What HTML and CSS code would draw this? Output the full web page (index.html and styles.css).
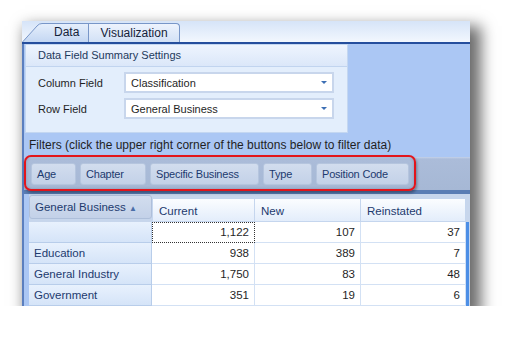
FILE: index.html
```html
<!DOCTYPE html>
<html lang="en">
  <head>
    <meta charset="UTF-8" />
    <title>Pivot Data</title>
    <link rel="stylesheet" href="styles.css">
  </head>
  <body>
    <main class="window">
      <nav class="tabstrip">
        <div class="tab tab-data">
          <svg class="tab-shape" width="68" height="20" viewBox="0 0 68 20">
            <defs>
              <linearGradient id="tabfill" x1="0" y1="0" x2="0" y2="1">
                <stop offset="0" stop-color="#e6effc" />
                <stop offset="1" stop-color="#c4d7f3" />
              </linearGradient>
            </defs>
            <path d="M0.5 20 L15 4 Q17 1.5 20 1.5 L66.5 1.5 L66.5 20" fill="url(#tabfill)" stroke="#7896c8" />
          </svg>
          <span>Data</span>
        </div>
        <div class="tab tab-vis">Visualization</div>
      </nav>
      <section class="page">
        <div class="settings">
          <h2 class="settings-title">Data Field Summary Settings</h2>
          <div class="field-row">
            <label>Column Field</label>
            <div class="combo">Classification<span class="arrow"></span></div>
          </div>
          <div class="field-row">
            <label>Row Field</label>
            <div class="combo">General Business<span class="arrow"></span></div>
          </div>
        </div>
        <p class="filters-note">Filters (click the upper right corner of the buttons below to filter data)</p>
        <div class="filter-bar">
          <button class="filter-btn w-age">Age</button>
          <button class="filter-btn w-chapter">Chapter</button>
          <button class="filter-btn w-specific">Specific Business</button>
          <button class="filter-btn w-type">Type</button>
          <button class="filter-btn w-position">Position Code</button>
          <span class="highlight"></span>
        </div>
        <div class="band"></div>
        <div class="grid">
          <div class="grid-corner">
            <button class="row-field-btn">General Business <span class="sort">▲</span></button>
          </div>
          <div class="col-head">Current</div>
          <div class="col-head">New</div>
          <div class="col-head">Reinstated</div>
          <div class="edge"></div>

          <div class="row-head"></div>
          <div class="cell focus">1,122</div>
          <div class="cell">107</div>
          <div class="cell">37</div>
          <div class="edge"></div>

          <div class="row-head">Education</div>
          <div class="cell">938</div>
          <div class="cell">389</div>
          <div class="cell">7</div>
          <div class="edge"></div>

          <div class="row-head">General Industry</div>
          <div class="cell">1,750</div>
          <div class="cell">83</div>
          <div class="cell">48</div>
          <div class="edge"></div>

          <div class="row-head">Government</div>
          <div class="cell">351</div>
          <div class="cell">19</div>
          <div class="cell">6</div>
          <div class="edge"></div>
        </div>
      </section>
    </main>
  </body>
</html>
```

FILE: styles.css
```css
* {
  box-sizing: border-box;
  margin: 0;
  padding: 0;
}
body {
  background: #fff;
  font-family: "Liberation Sans", Arial, sans-serif;
  font-size: 11px;
  color: #1f1f1f;
}
.window {
  margin: 21px 0 0 22px;
  width: 448px;
  height: 285px;
  display: flex;
  flex-direction: column;
  box-shadow: 7px 9px 14px 4px rgba(0, 0, 0, 0.58);
}
/*Tabs*/
.tabstrip {
  height: 23px;
  flex: none;
  display: flex;
  align-items: flex-end;
  background: linear-gradient(#d6e4f8, #f2f7fe);
  border-bottom: 2px solid #254e9d;
}
.tab {
  position: relative;
  height: 19px;
  font-size: 12px;
  color: #15233a;
  display: flex;
  align-items: center;
}
.tab-data {
  width: 68px;
  height: 20px;
  padding-left: 32px;
}
.tab-data .tab-shape {
  position: absolute;
  left: 0;
  top: 0;
}
.tab-data span {
  position: relative;
}
.tab-vis {
  width: 92px;
  margin-left: -2px;
  justify-content: center;
  background: linear-gradient(#edf3fd, #d2e1f6);
  border: 1px solid #7896c8;
  border-bottom: none;
  border-radius: 0 4px 0 0;
}
/*Page*/
.page {
  flex: 1;
  background: #abc7f4;
  border-left: 2px solid #5b7fbf;
  display: flex;
  flex-direction: column;
}
.settings {
  flex: none;
  margin: 0 0 0 1px;
  width: 323px;
  height: 89px;
  background: #e3eefc;
  border: 1px solid #c4d7f1;
}
.settings-title {
  height: 22px;
  padding: 4px 0 0 12px;
  font-size: 11px;
  font-weight: normal;
  color: #1e395b;
  background: linear-gradient(#eef4fe, #dbe7f9);
  border-bottom: 1px solid #c1d4ef;
}
.field-row {
  display: flex;
  align-items: center;
  padding: 5px 0 0 12px;
  height: 26px;
}
.field-row label {
  width: 86px;
  font-size: 11px;
}
.combo {
  position: relative;
  width: 210px;
  height: 21px;
  padding: 3px 0 0 5px;
  background: #fff;
  border: 2px solid #c8d6ec;
  font-size: 11px;
}
.combo .arrow {
  position: absolute;
  right: 5px;
  top: 7px;
  border-left: 3px solid transparent;
  border-right: 3px solid transparent;
  border-top: 3px solid #3c6fb4;
}
.filters-note {
  flex: none;
  margin: 6px 0 0 5px;
  height: 13px;
  font-size: 12px;
  line-height: 13px;
  color: #1f1f1f;
}
/*Filter bar*/
.filter-bar {
  flex: none;
  position: relative;
  margin-top: 5px;
  height: 33px;
  display: flex;
  align-items: center;
  gap: 4px;
  padding: 0 0 0 7px;
  background: linear-gradient(#c4d3ea 0, #abbcd9 2px, #a6b8d5);
}
.filter-btn {
  height: 22px;
  padding: 0 0 0 5px;
  text-align: left;
  font-family: inherit;
  font-size: 11px;
  letter-spacing: -0.2px;
  color: #1d3a6e;
  background: linear-gradient(#d2ddee, #c3d1e8);
  border: 1px solid #b5c5de;
  border-radius: 3px;
}
.w-age { width: 45px; }
.w-chapter { width: 66px; }
.w-specific { width: 109px; }
.w-type { width: 49px; }
.w-position { width: 93px; }
.highlight {
  position: absolute;
  left: 0;
  top: -2px;
  width: 392px;
  height: 36px;
  border: 2px solid #e3141b;
  border-radius: 7px;
  box-shadow: 1px 2px 3px rgba(0, 0, 0, 0.35), inset 0 0 3px rgba(60, 70, 100, 0.35);
}
.band {
  flex: none;
  height: 4px;
  background: #5a7db4;
}
/*Grid*/
.grid {
  flex: none;
  margin-left: 5px;
  display: grid;
  grid-template-columns: 123px 103px 106px 105px 3px;
  grid-template-rows: 28px repeat(4, 21px);
  background: #c7d6ec;
  font-size: 11.5px;
}
.grid-corner {
  padding: 1px 0 0 0;
}
.row-field-btn {
  width: 123px;
  height: 24px;
  padding-left: 5px;
  text-align: left;
  font-family: inherit;
  font-size: 11.5px;
  color: #1d3a6e;
  background: linear-gradient(#d2ddee, #c3d1e8);
  border: 1px solid #aebfda;
  border-radius: 3px;
}
.row-field-btn .sort {
  font-size: 8px;
  color: #4a6ea8;
}
.col-head {
  align-self: end;
  height: 24px;
  padding: 6px 0 0 6px;
  color: #1d3a6e;
  background: linear-gradient(#fbfdff, #e3edfb);
  border: 1px solid #c5d6ee;
  border-left: none;
}
.col-head:nth-child(2) {
  border-left: 1px solid #c5d6ee;
}
.edge {
  background: #4d8fe6;
}
.grid > .edge:nth-child(5) {
  background: #c7d6ec;
}
.row-head {
  padding: 4px 0 0 5px;
  color: #1d3a6e;
  background: linear-gradient(#e8f1fd, #d5e4f8);
  border-bottom: 1px solid #b8cdea;
  border-right: 1px solid #b8cdea;
}
.cell {
  padding: 4px 5px 0 0;
  text-align: right;
  background: #fff;
  border-bottom: 1px solid #d3e1f4;
  border-right: 1px solid #d3e1f4;
}
.cell.focus {
  border: 1px dotted #333;
  padding-top: 3px;
}
```
